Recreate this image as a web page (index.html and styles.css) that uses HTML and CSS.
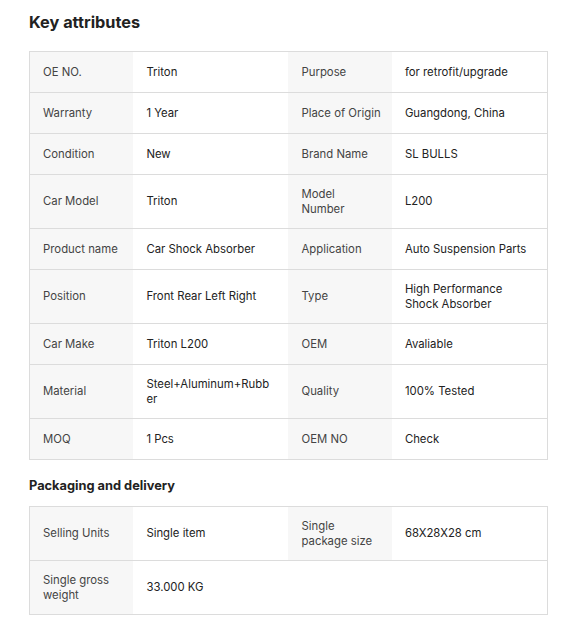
FILE: index.html
```html
<!DOCTYPE html>
<html>
<head>
<meta charset="utf-8">
<link rel="stylesheet" href="styles.css">
</head>
<body>
<div class="page">
  <h2 class="title">Key attributes</h2>
  <div class="attrs">
    <div class="k">OE NO.</div><div class="v">Triton</div><div class="k">Purpose</div><div class="v">for retrofit/upgrade</div>
    <div class="k">Warranty</div><div class="v">1 Year</div><div class="k">Place of Origin</div><div class="v">Guangdong, China</div>
    <div class="k">Condition</div><div class="v">New</div><div class="k">Brand Name</div><div class="v">SL BULLS</div>
    <div class="k">Car Model</div><div class="v">Triton</div><div class="k">Model<br>Number</div><div class="v">L200</div>
    <div class="k">Product name</div><div class="v">Car Shock Absorber</div><div class="k">Application</div><div class="v">Auto Suspension Parts</div>
    <div class="k">Position</div><div class="v">Front Rear Left Right</div><div class="k">Type</div><div class="v">High Performance Shock Absorber</div>
    <div class="k">Car Make</div><div class="v">Triton L200</div><div class="k">OEM</div><div class="v">Avaliable</div>
    <div class="k">Material</div><div class="v">Steel+Aluminum+Rubber</div><div class="k">Quality</div><div class="v">100% Tested</div>
    <div class="k">MOQ</div><div class="v">1 Pcs</div><div class="k">OEM NO</div><div class="v">Check</div>
  </div>
  <h3 class="subtitle">Packaging and delivery</h3>
  <div class="attrs">
    <div class="k">Selling Units</div><div class="v">Single item</div><div class="k">Single<br>package size</div><div class="v">68X28X28 cm</div>
    <div class="k">Single gross weight</div><div class="v">33.000 KG</div><div class="e"></div><div class="e"></div>
  </div>
</div>
</body>
</html>
```
FILE: styles.css
```css
html, body {
  margin: 0;
  padding: 0;
  background: #fff;
}
body {
  font-family: Inter, "Noto Sans", sans-serif;
  color: #222;
}
.page {
  width: 519px;
  margin-left: 29px;
  padding-top: 12px;
}
.title {
  margin: 0;
  font-size: 16.3px;
  line-height: 20px;
  font-weight: 700;
  color: #222;
}
.subtitle {
  margin: 18px 0 0;
  font-size: 12.8px;
  line-height: 16px;
  font-weight: 700;
  color: #222;
}
.attrs {
  display: grid;
  grid-template-columns: 20% 30% 20% 30%;
  border: 1px solid #dcdcdc;
  border-bottom: none;
  margin-top: 19px;
}
.subtitle + .attrs {
  margin-top: 12px;
}
.k, .v, .e {
  box-sizing: border-box;
  min-height: 41px;
  padding: 12px 13px;
  border-bottom: 1px solid #dcdcdc;
  display: flex;
  flex-direction: column;
  justify-content: center;
  font-size: 11.35px;
  line-height: 14.5px;
  overflow-wrap: anywhere;
}
.k {
  padding: 12px 8px 12px 13px;
  background: #f7f7f7;
  color: #444;
}
.v {
  color: #222;
}
```
